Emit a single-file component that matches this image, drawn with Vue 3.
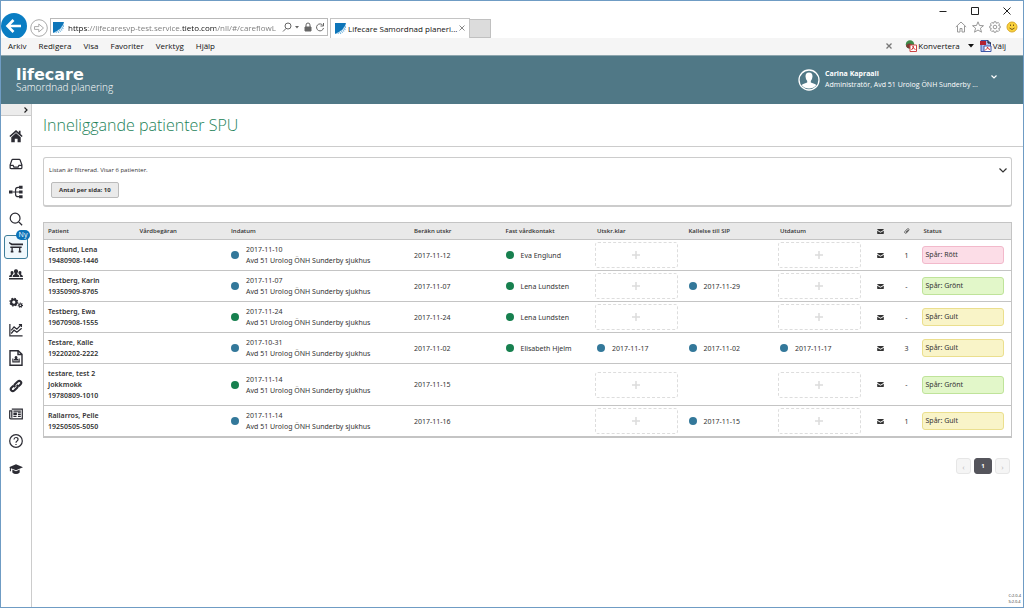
<script setup>
import { ref } from 'vue'

const address = ref('https://lifecaresvp-test.service.tieto.com/nll/#/careflowL')
const menus = ['Arkiv', 'Redigera', 'Visa', 'Favoriter', 'Verktyg', 'Hjälp']
const ward = 'Avd 51 Urolog ÖNH Sunderby sjukhus'

const rows = [
  { name: 'Testlund, Lena', id: '19480908-1446', inColor: 'blue', inDate: '2017-11-10', planned: '2017-11-12', contact: 'Eva Englund', ready: '', sip: '', out: '', files: '1', status: 'Rött', tone: 'red' },
  { name: 'Testberg, Karin', id: '19350909-8765', inColor: 'blue', inDate: '2017-11-07', planned: '2017-11-07', contact: 'Lena Lundsten', ready: '', sip: '2017-11-29', out: '', files: '-', status: 'Grönt', tone: 'lime' },
  { name: 'Testberg, Ewa', id: '19670908-1555', inColor: 'green', inDate: '2017-11-24', planned: '2017-11-24', contact: 'Lena Lundsten', ready: '', sip: '', out: '', files: '-', status: 'Gult', tone: 'yellow' },
  { name: 'Testare, Kalle', id: '19220202-2222', inColor: 'blue', inDate: '2017-10-31', planned: '2017-11-02', contact: 'Elisabeth Hjelm', ready: '2017-11-17', sip: '2017-11-02', out: '2017-11-17', files: '3', status: 'Gult', tone: 'yellow' },
  { name: 'testare, test 2 Jokkmokk', id: '19780809-1010', inColor: 'green', inDate: '2017-11-14', planned: '2017-11-15', contact: '', ready: '', sip: '', out: '', files: '-', status: 'Grönt', tone: 'lime' },
  { name: 'Rallarros, Pelle', id: '19250505-5050', inColor: 'blue', inDate: '2017-11-14', planned: '2017-11-16', contact: '', ready: '', sip: '2017-11-15', out: '', files: '1', status: 'Gult', tone: 'yellow' }
]

const nav = [
  { label: 'Hem', fill: 'M8 1.2 0.4 8l1.200 1.200L8 3.600l6.400 5.600 1.200-1.200L13.200 5.800V2h-2v2zM2.600 9.400 8 4.700l5.400 4.700V15H9.800v-4H6.600v4h-4z' },
  { label: 'Inkorg', line: 'M1.300 9 3.300 3.400Q3.600 2.800 4.200 2.800H11.800Q12.400 2.800 12.700 3.400L14.700 9V12.200Q14.700 13.300 13.600 13.300H2.400Q1.300 13.300 1.300 12.200ZM1.300 9.500H4.600L5.600 11.500H10.400L11.400 9.500H14.700' },
  { label: 'Flöde', fill: 'M0 6.200h4v3.600H0zM11.500 0.800h4v3.600h-4zM11.500 6.200h4v3.600h-4zM11.500 11.600h4v3.600h-4z', line: 'M4 8H12M12 2.600H10.500Q7.500 2.600 7.500 5.500V10.500Q7.500 13.400 10.500 13.400H12' },
  { label: 'Sök', line: 'M12.600 7A5.600 5.600 0 1 1 1.400 7A5.600 5.600 0 1 1 12.600 7M11 11.200 15 15.200' },
  { label: 'Inneliggande', active: true, fill: 'M0 2.200 3.600 4H16V6H2.800L0 3.800zM1.500 7.500h13v1.600h-13zM2.800 9h1.500v3.500H2.800zM11.500 9h1.500v3.500h-1.500zM2 12.200h3v2H2zM11 12.200h3v2h-3z' },
  { label: 'Team', fill: 'M8 1.500a2.400 2.400 0 0 1 1.500 4.300V7q2.500.6 2.500 3.200H4Q4 7.600 6.500 7V5.800A2.400 2.400 0 0 1 8 1.500M3.500 3.500a1.900 1.900 0 0 1 1.400 3Q3.200 8 3.100 10.200H0Q0 8 2.200 7.400 1 3.500 3.500 3.500M12.500 3.500q2.500 0 1.300 3.900Q16 8 16 10.200H12.900Q12.800 8 11.100 6.500a1.900 1.900 0 0 1 1.400-3M0 11.400h16v1.800H0z' },
  { label: 'Inställningar', gears: true },
  { label: 'Statistik', line: 'M1 1V14.800H15.500M2.500 12 5.800 8.200 9 10.500 14.500 6M2.500 8.500 5.800 4.500 9 7 14 1.800M11.300 1.800H14.200V4.600' },
  { label: 'Rapport', tall: true, line: 'M2 0.800H10.200L14 4.300V15.200H2ZM10 0.800V4.500H14', fill: 'M8 6a1.500 1.500 0 0 1 1 2.600q1.600.4 1.600 2H5.500q0-1.600 1.600-2A1.500 1.500 0 0 1 8 6M4.300 8.500h1v3h-1zM10.700 8.500h1v3h-1zM4.300 11.200h7.500v1.200H4.300z' },
  { label: 'Länkar', bold: 'M7 9.300Q5.300 7.500 7 5.800L10 2.800Q11.700 1.300 13.300 2.800 14.800 4.400 13.300 6.100L11 8.300M9 6.700Q10.700 8.500 9 10.200L6 13.200Q4.300 14.700 2.700 13.200 1.200 11.600 2.700 9.900L5 7.700' },
  { label: 'Nyheter', line: 'M3.200 2.500H15.200V13.500H2Q0.800 13.500 0.800 12.300V4.500H3.200V12.200M10.200 8.300H13.500M10.200 10.800H13.500M5 10.800H8.600M5 4.600H13.500', fill: 'M5 6.200h4v3H5zM10 6h3.500v1H10z' },
  { label: 'Hjälp', line: 'M15.200 8A7.200 7.200 0 1 1 0.800 8A7.200 7.200 0 1 1 15.200 8M5.700 6.200Q5.800 4 8 4 10.300 4 10.300 6 10.300 7.200 9.200 7.900 8 8.600 8 10M8 11.300V12.600' },
  { label: 'Utbildning', fill: 'M8 2.500 16 6 8 9.500 2.200 7V10.500H1V6.300L0 6zM3.800 8.600 8 10.500 12.200 8.600V12Q10.500 13.800 8 13.800 5.500 13.800 3.800 12z' }
]
</script>

<template>
  <div class="window">
    <div class="chrome">
      <div class="caption">
        <button aria-label="Minimera"><svg viewBox="0 0 10 10"><path d="M1.500 5.500H8.500" /></svg></button>
        <button aria-label="Maximera"><svg viewBox="0 0 10 10"><path d="M1.500 1.500H8.500V8.500H1.500Z" /></svg></button>
        <button aria-label="Stäng"><svg viewBox="0 0 10 10"><path d="M1.500 1.500 8.500 8.500M8.500 1.500 1.500 8.500" /></svg></button>
      </div>
      <div class="toolbar">
        <button class="back" aria-label="Bakåt"><svg viewBox="0 0 26 26"><circle cx="13" cy="13" r="13" fill="#0a7dc3" /><path d="M20 13H7M12.500 7 6.500 13 12.500 19" fill="none" stroke="#fff" stroke-width="2.600" /></svg></button>
        <button class="forward" aria-label="Framåt"><svg viewBox="0 0 18 18"><circle cx="9" cy="9" r="8.300" fill="#fff" stroke="#aaa" /><path d="M4.500 7.600H8.800V5L13.500 9 8.800 13V10.400H4.500Z" fill="none" stroke="#aaa" /></svg></button>
        <div class="address">
          <svg class="fav" viewBox="0 0 11 11"><path d="M0 0H11Q10 7 0 11Z" fill="#0d75b9" /><path d="M11 1Q9 8 1 11M11 4Q9 9 4 11" fill="none" stroke="#6fb3de" stroke-width="1.500" stroke-dasharray="1 1" /></svg>
          <input v-model="address" aria-label="Adress" />
          <svg class="a-icon" viewBox="0 0 10 10"><circle cx="6" cy="4" r="3" /><path d="M4 6.500 1 9.500" /></svg>
          <svg class="a-caret" viewBox="0 0 6 4"><path d="M1 1H5L3 3.500Z" fill="#666" /></svg>
          <svg class="a-icon" viewBox="0 0 10 10"><path d="M2 5H8V9H2Z" fill="#666" /><path d="M3 5V3Q3 1 5 1T7 3V5" /></svg>
          <svg class="a-icon" viewBox="0 0 10 10"><path d="M8 3.500A3.500 3.500 0 1 0 8.500 6M8.500 1V4H5.500" /></svg>
        </div>
        <div class="tab">
          <svg class="fav" viewBox="0 0 11 11"><path d="M0 0H11Q10 7 0 11Z" fill="#0d75b9" /><path d="M11 1Q9 8 1 11M11 4Q9 9 4 11" fill="none" stroke="#6fb3de" stroke-width="1.500" stroke-dasharray="1 1" /></svg>
          <span>Lifecare Samordnad planeri...</span>
          <button aria-label="Stäng flik"><svg viewBox="0 0 6 6"><path d="M.5.5 5.500 5.500M5.500.5.5 5.500" stroke="#888" /></svg></button>
        </div>
        <button class="newtab" aria-label="Ny flik"></button>
        <div class="tools">
          <button aria-label="Startsida"><svg viewBox="0 0 12 12"><path d="M.8 6 6 1 11.200 6M2.500 5V11H5V7.500H7V11H9.500V5" /></svg></button>
          <button aria-label="Favoriter"><svg viewBox="0 0 12 12"><path d="M6 .8 7.500 4.500 11.500 4.700 8.400 7.200 9.500 11.200 6 9 2.500 11.200 3.600 7.200.5 4.700 4.500 4.500Z" /></svg></button>
          <button aria-label="Verktyg"><svg viewBox="0 0 12 12"><circle cx="6" cy="6" r="1.800" /><path d="M5 .8H7L7.400 2.300 9.200 1.500 10.500 2.800 9.700 4.600 11.200 5V7L9.700 7.400 10.500 9.200 9.200 10.500 7.400 9.700 7 11.200H5L4.600 9.700 2.800 10.500 1.500 9.200 2.300 7.400.8 7V5L2.300 4.600 1.500 2.800 2.800 1.500 4.600 2.300Z" /></svg></button>
          <button aria-label="Skicka ett leende"><svg viewBox="0 0 12 12"><circle cx="6" cy="6" r="5" fill="#fad23c" stroke="#d9a92a" /><path d="M3.500 7Q6 10 8.500 7M4.500 3.500V5M7.500 3.500V5" stroke="#77591a" /></svg></button>
        </div>
      </div>
    </div>

    <div class="menubar">
      <button v-for="m in menus" :key="m">{{ m }}</button>
      <div class="plugins">
        <button class="x" aria-label="Stäng verktygsfält"><svg viewBox="0 0 6 6"><path d="M.5.5 5.500 5.500M5.500.5.5 5.500" stroke="#777" stroke-width="1.300" /></svg></button>
        <button class="plug"><svg viewBox="0 0 12 12"><circle cx="5" cy="4.500" r="4.200" fill="#3f8a4a" /><path d="M1 6Q3 2 7 4.500L6 8Q2 9 1 6Z" fill="#7b3a34" /><path d="M5 5H11.500V11.500H5Z" fill="#fff" stroke="#c44" /><path d="M6.500 10Q9 7 8 6 8 9 10.500 9.500" fill="none" stroke="#c33" /></svg>Konvertera</button>
        <button class="drop" aria-label="Fler val"><svg viewBox="0 0 6 4"><path d="M0 0H6L3 3.500Z" fill="#111" /></svg></button>
        <button class="plug"><svg viewBox="0 0 12 12"><path d="M1 .5H8L10.500 3V11.500H1Z" fill="#a9bcf0" stroke="#3c55a5" /><path d="M0 1H6V5H0Z" fill="#b32132" /><path d="M8 .5V3H11" fill="none" stroke="#111" /><path d="M4 6H11V11.500H4Z" fill="#fff" stroke="#3c55a5" /><path d="M5 10.500Q8 8 7.500 7 7.500 9 10 9.500" fill="none" stroke="#c33" /></svg>Välj</button>
      </div>
    </div>

    <header class="app-header">
      <div class="brand"><strong>lifecare</strong><span>Samordnad planering</span></div>
      <button class="user">
        <svg class="avatar" viewBox="0 0 22 22"><circle cx="11" cy="11" r="10" fill="#507886" stroke="#fff" stroke-width="1.300" /><path d="M11 3.500Q14.600 3.500 14.500 7.500 14.300 10.500 12.800 12V13.500L17.500 15.300Q18.200 16 18 16.500 15.500 19.500 11 19.500T4 16.500Q3.800 16 4.500 15.300L9.200 13.500V12Q7.700 10.500 7.500 7.500 7.400 3.500 11 3.500Z" fill="#fff" /></svg>
        <span class="who"><b>Carina Kapraali</b><span>Administratör, Avd 51 Urolog ÖNH Sunderby ...</span></span>
        <svg class="chev" viewBox="0 0 6 4"><path d="M.5.5 3 3 5.500.5" fill="none" stroke="#fff" stroke-width="1.200" /></svg>
      </button>
    </header>

    <div class="body">
      <aside>
        <button class="expand" aria-label="Visa meny"><svg viewBox="0 0 4 6"><path d="M.5.5 3 3 .5 5.500" fill="none" stroke="#222" stroke-width="1.200" /></svg></button>
        <nav>
          <a v-for="n in nav" :key="n.label" href="#" :aria-label="n.label" :class="{ active: n.active }">
            <svg viewBox="0 0 16 16" :class="{ tall: n.tall }">
              <path v-if="n.line" :d="n.line" class="line" />
              <path v-if="n.bold" :d="n.bold" class="line bold" />
              <path v-if="n.fill" :d="n.fill" />
              <template v-if="n.gears">
                <circle cx="5.500" cy="7" r="3" class="line thick" /><circle cx="5.500" cy="7" r="4.300" class="line teeth" />
                <circle cx="13" cy="10.500" r="1.600" class="line" /><circle cx="13" cy="10.500" r="2.500" class="line small-teeth" />
              </template>
            </svg>
            <span v-if="n.active" class="badge">Ny</span>
          </a>
        </nav>
      </aside>

      <main>
        <h1>Inneliggande patienter SPU</h1>
        <div class="content">
          <section class="filter">
            <div>
              <p>Listan är filtrerad. Visar 6 patienter.</p>
              <button class="chip">Antal per sida: 10</button>
            </div>
            <button class="open" aria-label="Visa filter"><svg viewBox="0 0 8 5"><path d="M.5.5 4 4 7.500.5" fill="none" stroke="#333" stroke-width="1.200" /></svg></button>
          </section>

          <table>
            <colgroup><col /><col /><col /><col /><col /><col /><col /><col /><col /><col class="narrow" /><col class="narrow" /><col /></colgroup>
            <thead>
              <tr>
                <th>Patient</th><th>Vårdbegäran</th><th colspan="2">Indatum</th><th>Beräkn utskr</th><th>Fast vårdkontakt</th>
                <th>Utskr.klar</th><th>Kallelse till SIP</th><th>Utdatum</th>
                <th class="mid" aria-label="Meddelanden"><svg class="mail" viewBox="0 0 8 6"><path d="M0 1Q0 0 1 0H7Q8 0 8 1L4 3.400ZM0 2 4 4.400 8 2V5Q8 6 7 6H1Q0 6 0 5Z" /></svg></th>
                <th class="mid" aria-label="Bilagor"><svg class="clip" viewBox="0 0 8 8"><path d="M6.500 3 3.500 6.500Q2.300 7.500 1.300 6.700T1.300 4.500L4.300 1.300Q5.300.4 6.200 1.100T6.300 2.800L3.800 5.500Q3 6 2.800 5.300L5 2.800" /></svg></th>
                <th>Status</th>
              </tr>
            </thead>
            <tbody>
              <tr v-for="r in rows" :key="r.id">
                <td class="patient">{{ r.name }}<br />{{ r.id }}</td>
                <td></td>
                <td colspan="2"><div class="mark"><i :class="r.inColor"></i><span>{{ r.inDate }}<br />{{ ward }}</span></div></td>
                <td>{{ r.planned }}</td>
                <td><div v-if="r.contact" class="mark"><i class="green"></i><span>{{ r.contact }}</span></div></td>
                <td :class="{ slot: !r.ready }"><div v-if="r.ready" class="mark"><i class="blue"></i><span>{{ r.ready }}</span></div><button v-else class="add" aria-label="Lägg till utskrivningsklar"><svg viewBox="0 0 8 8"><path d="M4 0V8M0 4H8" /></svg></button></td>
                <td><div v-if="r.sip" class="mark"><i class="blue"></i><span>{{ r.sip }}</span></div></td>
                <td :class="{ slot: !r.out }"><div v-if="r.out" class="mark"><i class="blue"></i><span>{{ r.out }}</span></div><button v-else class="add" aria-label="Lägg till utdatum"><svg viewBox="0 0 8 8"><path d="M4 0V8M0 4H8" /></svg></button></td>
                <td class="mid"><svg class="mail" viewBox="0 0 8 6"><path d="M0 1Q0 0 1 0H7Q8 0 8 1L4 3.400ZM0 2 4 4.400 8 2V5Q8 6 7 6H1Q0 6 0 5Z" /></svg></td>
                <td class="mid">{{ r.files }}</td>
                <td class="slot"><div class="status" :class="r.tone">Spår: {{ r.status }}</div></td>
              </tr>
            </tbody>
          </table>

          <div class="pager">
            <button disabled aria-label="Föregående">‹</button>
            <button class="current">1</button>
            <button disabled aria-label="Nästa">›</button>
          </div>
        </div>
        <footer>C:2.0.4<br />S:2.0.4</footer>
      </main>
    </div>
  </div>
</template>

<style>
body { margin: 0; }
</style>

<style scoped>
* { box-sizing: border-box; }
.window { min-height: 100vh; display: flex; flex-direction: column; background: #fff; border: 1px solid #6f9cc4; font: 8px/11px "Open Sans", "Noto Sans", sans-serif; color: #333; }
button { font: inherit; color: inherit; background: none; border: 0; padding: 0; margin: 0; display: flex; align-items: center; justify-content: center; }
svg { display: block; flex: none; }
.caption { display: flex; justify-content: flex-end; gap: 22px; padding: 4px 11px 0 0; height: 15px; }
.caption svg { width: 10px; height: 10px; fill: none; stroke: #222; }
.toolbar { display: flex; align-items: flex-end; height: 22px; }
.back svg { width: 26px; height: 26px; }
.back { height: 24px; }
.forward { margin-left: 3px; height: 21px; }
.forward svg { width: 18px; height: 18px; }
.address { display: flex; align-items: center; width: 278px; height: 18px; margin: 0 2px 2px 2px; padding: 0 2px; border: 1px solid #b9b9b9; background: #fff; }
.fav { width: 11px; height: 11px; }
.address input { flex: 1; min-width: 0; height: 14px; margin: 0 0 0 4px; padding: 0; border: 0; outline: 0; font: inherit; color: #555; background: linear-gradient(to right, #111 20px, #777 20px 113px, #111 113px 148px, #777 148px); -webkit-background-clip: text; background-clip: text; -webkit-text-fill-color: transparent; }
.a-icon { width: 10px; height: 10px; fill: none; stroke: #666; margin-left: 2px; }
.a-caret { width: 6px; height: 4px; margin: 0 1px 0 2px; }
.tab { display: flex; align-items: center; gap: 2px; width: 140px; height: 20px; padding: 0 4px 1px; border: 1px solid #c4c4c4; border-bottom: 0; color: #111; white-space: nowrap; }
.tab span { flex: 1; }
.tab button svg { width: 6px; height: 6px; }
.newtab { width: 21px; height: 19px; background: #dcdcdc; border: 1px solid #c0c0c0; border-left: 0; }
.tools { margin: 0 5px 5px auto; display: flex; gap: 5px; }
.tools svg { width: 12px; height: 12px; fill: none; stroke: #999; stroke-width: 1; }
.menubar { display: flex; align-items: center; gap: 12px; height: 17px; padding: 0 17px 2px 7px; background: #f5f5f5; color: #111; }
.plugins { margin-left: auto; display: flex; align-items: center; }
.x { margin-right: 13px; }
.x svg { width: 6px; height: 6px; }
.plug { gap: 1px; }
.plug svg { width: 12px; height: 12px; }
.drop { margin: 0 6px 0 8px; }
.drop svg { width: 6px; height: 4px; }
.app-header { display: flex; align-items: center; justify-content: space-between; height: 49px; padding: 0 26px 0 15px; background: #507886; border-top: 1px solid #8ea6ae; color: #fff; }
.brand { display: flex; flex-direction: column; padding-top: 1px; }
.brand strong { font: 700 16px/13px "DejaVu Sans", sans-serif; }
.brand span { font-size: 10px; line-height: 12px; font-weight: 300; }
.user { text-align: left; }
.avatar { width: 22px; height: 22px; margin-right: 5px; }
.who { display: flex; flex-direction: column; width: 166px; padding-bottom: 3px; font-size: 7px; white-space: nowrap; }
.who b { font-weight: 700; }
.chev { width: 6px; height: 4px; margin-bottom: 6px; }
.body { flex: 1; display: flex; }
aside { width: 31px; border-right: 1px solid #ccc; }
.expand { width: 100%; height: 12px; background: #ececec; border-bottom: 1px solid #ccc; justify-content: flex-end; padding-right: 3px; }
.expand svg { width: 4px; height: 6px; }
nav { display: flex; flex-direction: column; justify-content: space-between; align-items: center; height: 357px; margin-top: 8px; }
nav a { position: relative; width: 24px; height: 24px; display: flex; align-items: center; justify-content: center; border: 1px solid transparent; border-radius: 3px; color: #2b2b33; }
nav svg { width: 14px; height: 14px; fill: currentColor; }
nav svg.tall { width: 16px; height: 16px; }
nav a.active { background: #f0f8fc; border-color: #3e7d99; }
.line { fill: none; stroke: currentColor; stroke-width: 1.400; }
.bold { stroke-width: 2.400; }
.thick { stroke-width: 2.400; }
.teeth { stroke-width: 1.600; stroke-dasharray: 1.700 1.700; }
.small-teeth { stroke-width: 1.200; stroke-dasharray: 1 1; }
.badge { position: absolute; top: -6px; right: -3px; width: 14px; height: 10px; border-radius: 5px; background: #0b73b8; color: #fff; font-size: 7px; line-height: 10px; text-align: center; }
main { flex: 1; min-width: 0; display: flex; flex-direction: column; }
h1 { margin: 0; padding: 0 11px; height: 43px; font-size: 16px; line-height: 42px; font-weight: 300; color: #1d8259; border-bottom: 1px solid #ccc; }
.content { padding: 10px 11px 0; }
.filter { display: flex; justify-content: space-between; align-items: flex-start; margin-bottom: 15px; padding: 7px 4px 7px 5px; border: 1px solid #ccc; border-bottom-width: 2px; border-radius: 3px; }
.filter p { margin: 0 0 6px; font-size: 6px; line-height: 11px; }
.chip { height: 16px; padding: 0 7px; margin-left: 2px; border: 1px solid #bbb; border-radius: 2px; background: #eaeaea; font-size: 6px; font-weight: 700; }
.open { padding: 3px 0; }
.open svg { width: 8px; height: 5px; }
table { width: 100%; table-layout: fixed; border-spacing: 0; border: 1px solid #c4c4c4; border-bottom-width: 2px; font-family: "Noto Sans", "Open Sans", sans-serif; font-size: 7px; }
.narrow { width: 26px; }
th { height: 17px; padding: 0 4px; background: #e9e9e9; border-bottom: 1px solid #c4c4c4; text-align: left; font-family: "Open Sans", sans-serif; font-size: 6px; font-weight: 600; white-space: nowrap; }
td { height: 31px; padding: 4px 4px; border-bottom: 1px solid #c4c4c4; }
tbody tr:last-child td { height: 30px; border-bottom: 0; }
.patient { font-weight: 600; padding-right: 32px; }
.mark { display: flex; align-items: center; gap: 7px; white-space: nowrap; }
i { width: 8px; height: 8px; border-radius: 50%; flex: none; }
.blue { background: #33789a; }
.green { background: #17804f; }
th.mid, td.mid { text-align: center; padding: 0; }
.mid svg { margin: 0 auto; }
.mail { width: 7px; height: 5px; fill: #333; }
.clip { width: 6px; height: 6px; fill: none; stroke: #444; stroke-width: 1; }
td.slot { padding: 2px 7px 2px 2px; }
.add { width: 100%; height: 26px; border: 1px dashed #ddd; border-radius: 3px; }
.add svg { width: 8px; height: 8px; stroke: #dcdcdc; stroke-width: 1.500; }
.status { height: 18px; line-height: 16px; padding: 0 3px; border: 1px solid; border-radius: 3px; }
.red { background: #fcdde7; border-color: #f2b9cb; }
.lime { background: #e2f7c9; border-color: #bfe39a; }
.yellow { background: #f9f4c8; border-color: #ebdf8e; }
.pager { display: flex; justify-content: flex-end; align-items: center; gap: 3px; margin: 20px 2px 0; }
.pager button { width: 15px; height: 16px; border: 1px solid #e6e6e6; border-radius: 3px; background: #f5f5f5; color: #bbb; }
.pager .current { width: 18px; background: #55555c; border-color: #55555c; color: #fff; font-size: 6px; font-weight: 700; }
footer { margin: auto 2px 2px auto; font-size: 4px; line-height: 6px; }
</style>
